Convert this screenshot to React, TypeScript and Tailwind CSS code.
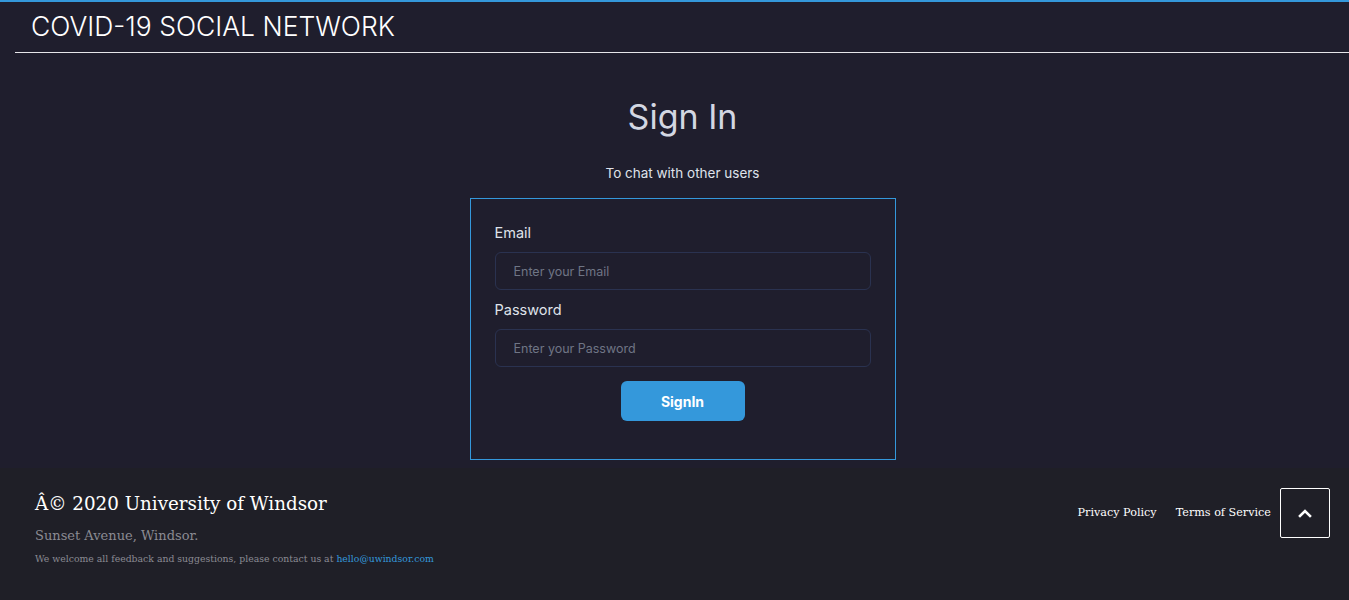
import React from 'react';

const sans = { fontFamily: '"Inter", "Open Sans", sans-serif' };
const slab = { fontFamily: '"DejaVu Serif", "Liberation Serif", serif' };

const Field = ({ label, type, placeholder }: { label: string; type: string; placeholder: string }) => (
  <div className="flex flex-col">
    <label className="text-[14.5px] text-[#dfe2ea] leading-[20px] mb-[9px]">{label}</label>
    <input
      type={type}
      placeholder={placeholder}
      className="h-[38px] w-full rounded-[6px] border border-[#2a3250] bg-transparent px-[18px] text-[12.5px] text-white placeholder:text-[#6f7585] outline-none"
    />
  </div>
);

export default function App() {
  return (
    <div className="min-h-[600px] bg-[#1f1e2d] flex flex-col" style={sans}>
      <div className="h-[2px] bg-[#3498db]" />
      <header className="ml-[15px] border-b border-[#e6e6ea] h-[51px] flex items-center pl-[16px]">
        <h1 className="text-[26.5px] font-light text-white leading-none mt-[-1px]">COVID-19 SOCIAL NETWORK</h1>
      </header>

      <main className="ml-[16px] flex flex-col items-center pt-[42px]">
        <h2 className="text-[34px] font-normal text-[#d3d7e2] leading-[44px]">Sign In</h2>
        <p className="mt-[25px] text-[13.5px] text-[#dfe2ea] leading-[18px]">To chat with other users</p>
        <div className="mt-[16px] w-[426px] h-[262px] border border-[#3498db] px-[24px] pt-[24px] flex flex-col gap-[10px]">
          <Field label="Email" type="email" placeholder="Enter your Email" />
          <Field label="Password" type="password" placeholder="Enter your Password" />
          <div className="flex justify-center mt-[4px]">
            <button className="w-[124px] h-[40px] rounded-[6px] bg-[#3498db] text-white text-[14px] font-bold">SignIn</button>
          </div>
        </div>
      </main>

      <footer className="bg-[#1f1f27] flex-1 mt-[8px] flex justify-between items-start pl-[35px] pr-[19px] pt-[23px] pb-[20px]" style={slab}>
        <div className="flex flex-col">
          <div className="text-[18.3px] text-white leading-[26px]">Â© 2020 University of Windsor</div>
          <div className="text-[13px] text-[#8b8b93] mt-[9px] leading-[20px]">Sunset Avenue, Windsor.</div>
          <div className="text-[9.3px] text-[#8b8b93] mt-[6px] leading-[14px]">
            We welcome all feedback and suggestions, please contact us at{' '}
            <a href="#" className="text-[#3498db]">hello@uwindsor.com</a>
          </div>
        </div>
        <div className="flex items-center gap-[9px] mt-[-3px]">
          <a href="#" className="text-[11.2px] text-white">Privacy Policy</a>
          <a href="#" className="text-[11.2px] text-white ml-[10px]">Terms of Service</a>
          <button className="w-[50px] h-[50px] border border-white rounded-[2px] flex items-center justify-center">
            <svg width="14" height="10" viewBox="0 0 14 10" fill="none">
              <path d="M2 8l5-5 5 5" stroke="white" strokeWidth="2.6" strokeLinecap="square" />
            </svg>
          </button>
        </div>
      </footer>
    </div>
  );
}
